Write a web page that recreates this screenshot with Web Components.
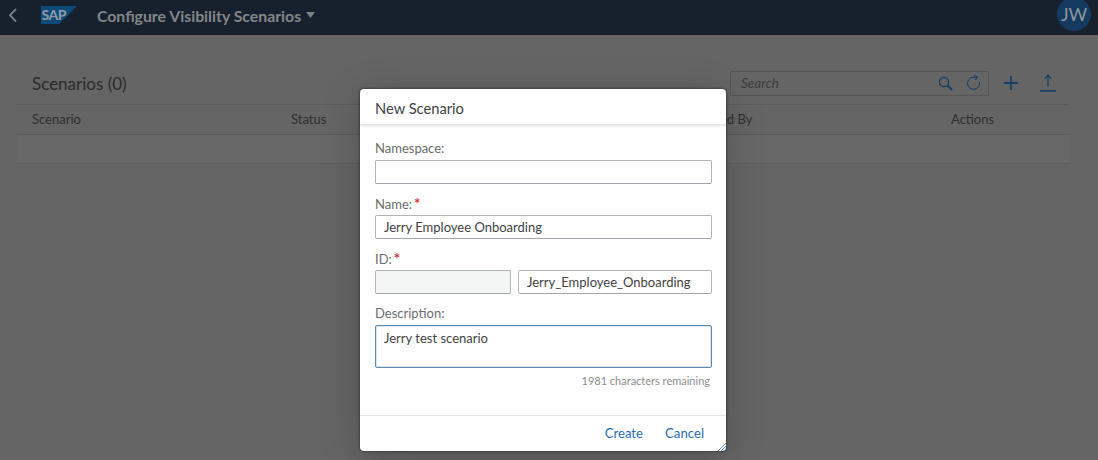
<!DOCTYPE html>
<html>
<head>
<meta charset="utf-8">
<title>Configure Visibility Scenarios</title>
<style>
    html, body { margin: 0; height: 100%; }
    body { width: 1098px; height: 460px; overflow: hidden; font-family: Lato, "Open Sans", sans-serif; }
</style>
</head>
<body>
<visibility-app>
    <shell-bar slot="bar" title="Configure Visibility Scenarios" initials="JW"></shell-bar>
    <scenario-list slot="page"></scenario-list>
    <new-scenario-dialog slot="dialog"></new-scenario-dialog>
</visibility-app>

<script>
/**
 * Page frame: shell bar, dimmed page and the dialog over it
 */
class VisibilityApp extends HTMLElement {
    connectedCallback() {
        this.attachShadow({ mode: 'open' });
        this.shadowRoot.innerHTML = `
            <style>
                :host {
                    display: flex;
                    flex-direction: column;
                    position: relative;
                    width: 1098px;
                    height: 460px;
                    overflow: hidden;
                    background: #656565;
                }
                .dialog { position: absolute; left: 360px; top: 89px; }
            </style>
            <slot name="bar"></slot>
            <slot name="page"></slot>
            <div class="dialog"><slot name="dialog"></slot></div>
        `;
    }
}

class ShellBar extends HTMLElement {
    connectedCallback() {
        const title = this.getAttribute('title') ?? '';
        const initials = this.getAttribute('initials') ?? '';
        this.removeAttribute('title');
        this.attachShadow({ mode: 'open' });
        this.shadowRoot.innerHTML = `
            <style>
                :host {
                    display: flex;
                    align-items: center;
                    flex: none;
                    box-sizing: border-box;
                    height: 35px;
                    padding: 0 7px 5px 8px;
                    background: #17212d;
                }
                .back { display: block; }
                .logo { display: block; margin-left: 23px; }
                .title {
                    margin-left: 20px;
                    font: 700 15.8px Lato, sans-serif;
                    color: #838689;
                    white-space: nowrap;
                }
                .caret { display: block; margin-left: 5px; }
                .avatar {
                    margin-left: auto;
                    width: 34px;
                    height: 34px;
                    margin-top: -2px;
                    border-radius: 50%;
                    background: #143a60;
                    color: #8f979f;
                    font: 400 18px Lato, sans-serif;
                    display: flex;
                    align-items: center;
                    justify-content: center;
                }
            </style>
            <svg class="back" width="10" height="14" viewBox="0 0 10 14">
                <path d="M8 1 2 7.2 8 13.5" fill="none" stroke="#7c8186" stroke-width="1.8"/>
            </svg>
            <svg class="logo" width="36" height="18" viewBox="0 0 36 18">
                <path d="M0 0H36L18 18H0Z" fill="#0c4a78"/>
                <text x="0.5" y="14" font-family="Lato, sans-serif" font-weight="900" font-size="14" letter-spacing="-.5" fill="#8a97a3">SAP</text>
            </svg>
            <span class="title">${title}</span>
            <svg class="caret" width="10" height="6" viewBox="0 0 10 6"><path d="M0 0H9L4.5 6Z" fill="#7c8186"/></svg>
            <span class="avatar">${initials}</span>
        `;
    }
}

class ScenarioList extends HTMLElement {
    connectedCallback() {
        this.attachShadow({ mode: 'open' });
        this.shadowRoot.innerHTML = `
            <style>
                :host {
                    display: block;
                    padding: 32px 29px 0 17px;
                    color: #2f2f2f;
                    font-family: Lato, sans-serif;
                }
                .toolbar {
                    display: flex;
                    align-items: center;
                    height: 32px;
                    padding: 0 13px 0 15px;
                }
                h2 { margin: 0; font-size: 17px; font-weight: 400; color: #2b2b2b; }
                .search {
                    margin-left: auto;
                    box-sizing: border-box;
                    display: flex;
                    align-items: center;
                    width: 259px;
                    height: 25px;
                    padding: 0 7px 0 10px;
                    border: 1px solid #555;
                    border-radius: 1px;
                    font-size: 13.5px;
                    font-style: italic;
                    color: #3c3c3c;
                }
                .search span { margin-right: auto; }
                .search svg + svg { margin-left: 13px; }
                .tool { display: block; margin-left: 15px; }
                .tool + .tool { margin-left: 22px; }
                .row {
                    display: grid;
                    grid-template-columns: 259px 398px 262px 1fr;
                    box-sizing: border-box;
                    height: 30px;
                    align-items: center;
                    padding: 0 15px 2px;
                    border-top: 1px solid #5c5c5c;
                    font-size: 13px;
                    color: #2f2f2f;
                }
                .row.empty { background: #686868; border-bottom: 1px solid #5c5c5c; box-sizing: content-box; height: 28px; padding-bottom: 0; }
            </style>
            <div class="toolbar">
                <h2>Scenarios (0)</h2>
                <div class="search">
                    <span>Search</span>
                    <svg width="15" height="15" viewBox="0 0 15 15" fill="none" stroke="#143c63">
                        <circle cx="6" cy="6" r="4.6" stroke-width="1.2"/>
                        <path d="M9.4 9.4 14 14" stroke-width="1.8"/>
                    </svg>
                    <svg width="15" height="16" viewBox="0 0 15 16" fill="none" stroke="#143c63" stroke-width="1">
                        <path d="M9.5 2.6A6 6 0 1 0 13.4 7"/>
                        <path d="M8 .5 11.6 2 9.4 5" stroke-width="1.1"/>
                    </svg>
                </div>
                <svg class="tool" width="14" height="14" viewBox="0 0 14 14" stroke="#14406b" stroke-width="1.8">
                    <path d="M7 0V14M0 7H14"/>
                </svg>
                <svg class="tool" width="16" height="18" viewBox="0 0 16 18" fill="none" stroke="#14406b">
                    <path d="M8 13V2M4.6 5 8 1.2 11.4 5" stroke-width="1.2"/>
                    <path d="M0 16.8H16" stroke-width="1.6"/>
                </svg>
            </div>
            <div class="row" style="margin-top:5px">
                <span>Scenario</span><span>Status</span><span>Created By</span><span>Actions</span>
            </div>
            <div class="row empty"></div>
        `;
    }
}

class FormField extends HTMLElement {
    connectedCallback() {
        const required = this.hasAttribute('required');
        const label = this.getAttribute('label') ?? '';
        this.attachShadow({ mode: 'open' });
        this.shadowRoot.innerHTML = `
            <style>
                :host { display: block; }
                label {
                    display: block;
                    height: 17px;
                    line-height: 17px;
                    margin-bottom: 3px;
                    font-size: 13px;
                    color: #6a6d70;
                }
                i { font-style: normal; color: #d8333a; font-weight: 700; font-size: 15px; margin-left: 2px; }
                .controls { display: flex; gap: 7px; }
            </style>
            <label>${label}${required ? '<i>*</i>' : ''}</label>
            <div class="controls"><slot></slot></div>
        `;
    }
}

class TextBox extends HTMLElement {
    connectedCallback() {
        this.attachShadow({ mode: 'open' });
        this.shadowRoot.innerHTML = `
            <style>
                :host {
                    display: block;
                    flex: 1 1 0;
                    box-sizing: border-box;
                    height: 24px;
                    padding: 0 8px;
                    line-height: 22px;
                    border: 1px solid #b0b5ba;
                    border-bottom-color: #9fa5aa;
                    border-radius: 2px;
                    background: #fff;
                    font-size: 13px;
                    color: #3f4246;
                    white-space: nowrap;
                    overflow: hidden;
                }
                :host([disabled]) { background: #f4f5f5; }
                :host([area]) {
                    height: 43px;
                    line-height: 20px;
                    padding-top: 2px;
                    border-color: #5a8ab4;
                    box-shadow: inset 0 0 0 1px #dde4ea;
                }
            </style>
            <slot></slot>
        `;
    }
}

class NewScenarioDialog extends HTMLElement {
    connectedCallback() {
        this.attachShadow({ mode: 'open' });
        this.shadowRoot.innerHTML = `
            <style>
                :host {
                    display: flex;
                    flex-direction: column;
                    position: relative;
                    box-sizing: border-box;
                    width: 366px;
                    height: 362px;
                    border-radius: 4px;
                    background: #fff;
                    box-shadow: 0 0 3px rgba(0,0,0,.6), 0 8px 40px rgba(0,0,0,.2);
                    font-family: Lato, sans-serif;
                }
                header {
                    flex: none;
                    height: 36px;
                    box-sizing: border-box;
                    padding: 9px 15px 0;
                    line-height: 20px;
                    font-size: 14.7px;
                    color: #3f4246;
                    border-bottom: 1px solid #e5e5e5;
                    box-shadow: 0 1px 3px rgba(0,0,0,.12);
                }
                .body {
                    flex: 1;
                    display: flex;
                    flex-direction: column;
                    gap: 11px;
                    padding: 15px 14px 0 15px;
                }
                .counter {
                    margin-top: -5px;
                    padding-right: 2px;
                    text-align: right;
                    font-size: 11px;
                    color: #8a8d90;
                }
                footer {
                    flex: none;
                    display: flex;
                    justify-content: flex-end;
                    gap: 22px;
                    height: 36px;
                    box-sizing: border-box;
                    padding: 0 22px 2px 0;
                    align-items: center;
                    border-top: 1px solid #e5e5e5;
                    font-size: 13.2px;
                    color: #2a6cb0;
                }
                .grip { position: absolute; right: 0; bottom: 0; display: block; }
            </style>
            <header>New Scenario</header>
            <div class="body">
                <form-field label="Namespace:"><text-box></text-box></form-field>
                <form-field label="Name:" required><text-box>Jerry Employee Onboarding</text-box></form-field>
                <form-field label="ID:" required>
                    <text-box disabled style="flex:0 0 136px"></text-box>
                    <text-box>Jerry_Employee_Onboarding</text-box>
                </form-field>
                <form-field label="Description:"><text-box area>Jerry test scenario</text-box></form-field>
                <div class="counter">1981 characters remaining</div>
            </div>
            <footer><span>Create</span><span>Cancel</span></footer>
            <svg class="grip" width="8" height="8" viewBox="0 0 8 8" stroke="#5b8fc2" fill="none">
                <path d="M0 8 8 0M3 8 8 3M6 8 8 6"/>
            </svg>
        `;
    }
}

customElements.define('visibility-app', VisibilityApp);
customElements.define('shell-bar', ShellBar);
customElements.define('scenario-list', ScenarioList);
customElements.define('form-field', FormField);
customElements.define('text-box', TextBox);
customElements.define('new-scenario-dialog', NewScenarioDialog);
</script>
</body>
</html>
